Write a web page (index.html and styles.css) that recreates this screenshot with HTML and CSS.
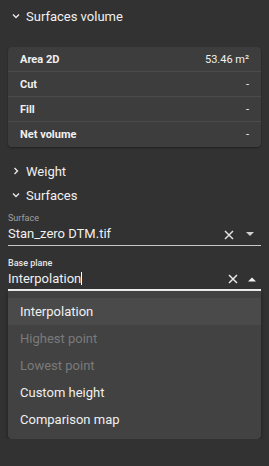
FILE: index.html
```html
<!DOCTYPE html>
<html lang="en">
<head>
    <meta charset="UTF-8">
    <meta name="viewport" content="width=device-width, initial-scale=1.0">
    <title>Surfaces volume</title>
    <link rel="stylesheet" href="styles.css">
</head>
<body>
    <div class="panel">
        <div class="section-header top">
            <svg class="chev" width="10" height="10" viewBox="0 0 10 10"><path d="M2 3.5 L5 6.5 L8 3.5" fill="none" stroke="#e8e8e8" stroke-width="1.4"/></svg>
            <span>Surfaces volume</span>
        </div>

        <div class="card">
            <div class="row"><span>Area 2D</span><span class="val">53.46 m²</span></div>
            <div class="row"><span>Cut</span><span class="val">-</span></div>
            <div class="row"><span>Fill</span><span class="val">-</span></div>
            <div class="row"><span>Net volume</span><span class="val">-</span></div>
        </div>

        <div class="section-header sub">
            <svg class="chev" width="10" height="10" viewBox="0 0 10 10"><path d="M3.5 2 L6.5 5 L3.5 8" fill="none" stroke="#e8e8e8" stroke-width="1.4"/></svg>
            <span>Weight</span>
        </div>
        <div class="section-header sub">
            <svg class="chev" width="10" height="10" viewBox="0 0 10 10"><path d="M2 3.5 L5 6.5 L8 3.5" fill="none" stroke="#e8e8e8" stroke-width="1.4"/></svg>
            <span>Surfaces</span>
        </div>

        <div class="field">
            <label class="field-label">Surface</label>
            <div class="input">
                <span class="text">Stan_zero DTM.tif</span>
                <svg class="clear" width="10" height="10" viewBox="0 0 10 10"><path d="M1 1 L9 9 M9 1 L1 9" stroke="#e0e0e0" stroke-width="1.5"/></svg>
                <svg class="arrow" width="8" height="5" viewBox="0 0 8 5"><path d="M0 0 L8 0 L4 4 Z" fill="#d0d0d0"/></svg>
            </div>
        </div>

        <div class="field focused">
            <label class="field-label">Base plane</label>
            <div class="input">
                <span class="text">Interpolation<span class="caret"></span></span>
                <svg class="clear" width="10" height="10" viewBox="0 0 10 10"><path d="M1 1 L9 9 M9 1 L1 9" stroke="#e8e8e8" stroke-width="1.5"/></svg>
                <svg class="arrow" width="8" height="5" viewBox="0 0 8 5"><path d="M0 4.5 L8 4.5 L4 0.5 Z" fill="#f0f0f0"/></svg>
            </div>
            <ul class="menu">
                <li class="active">Interpolation</li>
                <li class="disabled">Highest point</li>
                <li class="disabled">Lowest point</li>
                <li>Custom height</li>
                <li>Comparison map</li>
            </ul>
        </div>
    </div>
</body>
</html>
```

FILE: styles.css
```css
body {
    margin: 0;
    background-color: #323232;
    font-family: Roboto, "Liberation Sans", Arial, sans-serif;
    color: #f0f0f0;
}
.panel {
    padding: 0 8px;
}
.section-header {
    display: flex;
    align-items: center;
    gap: 5px;
    padding-left: 3px;
    font-size: 13px;
}
.section-header.top {
    height: 32px;
}
.section-header.sub {
    height: 24px;
}
.card + .section-header {
    margin-top: 12px;
}
.chev {
    flex: none;
}
.card {
    margin-top: 15px;
    background-color: #3d3d3d;
    border-radius: 4px;
    box-shadow: 0 1px 2px rgba(0, 0, 0, 0.35);
}
.row {
    display: flex;
    justify-content: space-between;
    align-items: center;
    height: 24px;
    padding: 0 12px;
    font-size: 11px;
    font-weight: bold;
    border-bottom: 1px solid #4b4b4b;
}
.row:last-child {
    border-bottom: none;
    height: 25px;
}
.val {
    font-weight: normal;
}
.field {
    margin-top: 5px;
}
.field.focused {
    margin-top: 11px;
    position: relative;
}
.field-label {
    display: block;
    font-size: 9px;
    line-height: 12px;
    color: #a0a0a0;
}
.focused .field-label {
    color: #e6e6e6;
    font-weight: 500;
}
.input {
    display: flex;
    align-items: center;
    height: 21px;
    border-bottom: 1px solid #c8c8c8;
    font-size: 13px;
}
.focused .input {
    height: 20px;
    border-bottom: 2px solid #f4f4f4;
}
.input .text {
    flex: 1;
    padding-bottom: 2px;
}
.caret {
    display: inline-block;
    width: 1px;
    height: 13px;
    background-color: #fff;
    vertical-align: -2px;
}
.clear {
    margin-right: 12px;
}
.arrow {
    margin-right: 7px;
}
.focused .clear {
    margin-right: 10px;
}
.focused .arrow {
    margin-right: 5px;
}
.menu {
    list-style: none;
    margin: 0;
    padding: 7px 0 6px;
    background-color: #424242;
    border-radius: 0 0 4px 4px;
    box-shadow: 0 2px 4px rgba(0, 0, 0, 0.4);
}
.menu li {
    height: 27px;
    line-height: 27px;
    padding: 0 12px;
    font-size: 13px;
    color: #f0f0f0;
}
.menu li.active {
    background-color: #4a4a4a;
}
.menu li.disabled {
    color: #7a7a7a;
}
```
